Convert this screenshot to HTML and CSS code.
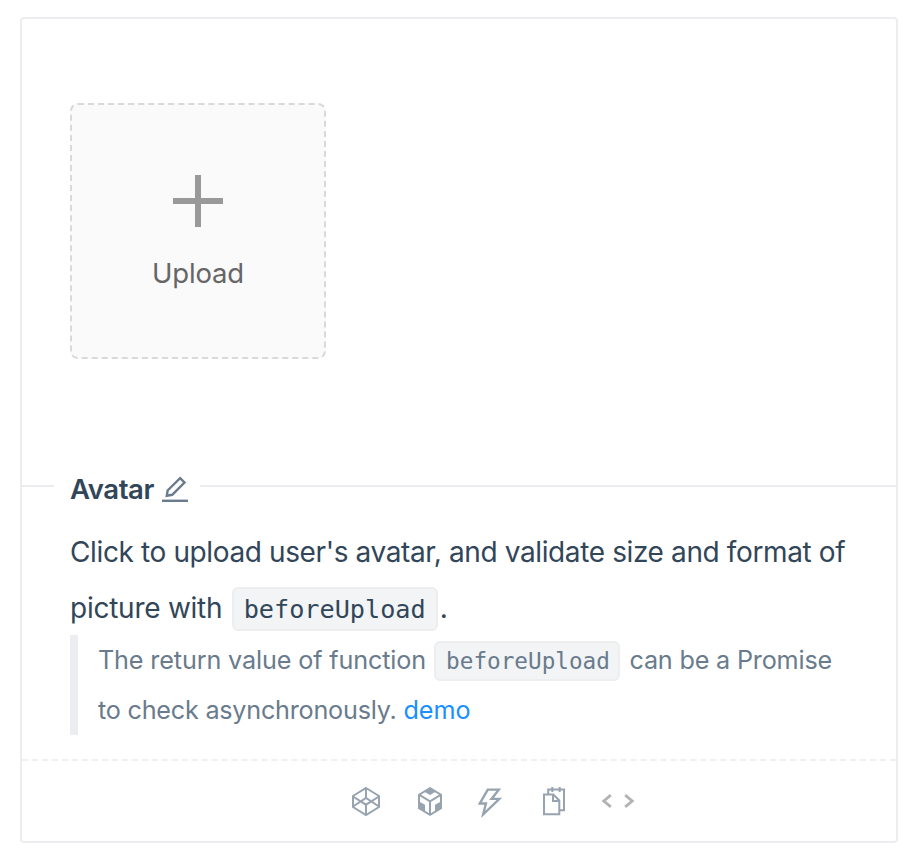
FILE: index.html
```
<!DOCTYPE html>
<html lang="en">
<head>
<meta charset="utf-8">
<title>Avatar upload</title>
<link rel="stylesheet" href="styles.css">
</head>
<body>
<section class="card">
  <div class="demo">
    <div class="upload" role="button">
      <svg class="plus" viewBox="0 0 50 52"><path d="M22 0h6v23h22v6H28v23h-6V29H0v-6h22z"/></svg>
      <div class="upload-text">Upload</div>
    </div>
  </div>
  <div class="title-row">
    <div class="title"><span class="title-text">Avatar</span>
      <svg class="edit" viewBox="0 0 26 26"><path d="M18.1 2.1 22.5 6.5 10.2 18.8 4.8 19.7 5.6 14.5Z"/><path d="M0 24.8h26"/></svg>
    </div>
  </div>
  <div class="description">
    <p><span class="line-one">Click to upload user's avatar, and validate size and format of</span><br><span class="line-two">picture with</span> <code>beforeUpload</code>.</p>
    <blockquote><span class="quote-one">The return value of function</span> <code>beforeUpload</code> <span class="quote-end">can be a Promise</span><br><span class="quote-two">to check asynchronously. <a>demo</a></span></blockquote>
  </div>
  <div class="actions">
    <svg viewBox="0 0 64 40"><path class="line" d="M32 7 45 15V26L32 34 19 26V15ZM19 15.5 32 23.7 45 15.5M19 25.5 32 17 45 25.5M32 7V17M32 23.7V34"/></svg>
    <svg viewBox="0 0 64 40"><path class="line" d="M32 7.2 43 13.7V27.3L32 33.8 21 27.3V13.7ZM21 13.7 32 20.3 43 13.7M32 20.3V33.8"/><path d="M32 7 38 10.5 32 14 26 10.5ZM21 20.5 27 23.8V30.8L21 27ZM43 20.5 37 23.8V30.8L43 27Z"/></svg>
    <svg class="bolt" viewBox="0 0 60 40"><path transform="translate(10 4) scale(.03516)" d="M848 359.3H627.7L825.8 109c4.1-5.3.4-13-6.3-13H436c-2.8 0-5.5 1.5-6.9 4L170 547.5c-3.1 5.3.7 12 6.9 12h174.4l-89.4 357.6c-1.9 7.8 7.5 13.3 13.3 7.7L853.5 373c5.2-4.9 1.7-13.7-5.5-13.7zM378.2 732.5l60.3-241H281.1l189.6-327.4h224.6L487 427.4h211L378.2 732.5z"/></svg>
    <svg viewBox="0 0 64 40"><path class="line" d="M22 13.5H31.3L37.3 19.5V33.2H22ZM31 13.5V20H37.3M26.2 13.5V8.5H42V29.2H37.3M30.3 6V11M37.7 6V11"/></svg>
    <svg class="code-icon" viewBox="0 0 64 40"><path d="M24.8 14.2 17.8 20 24.8 25.8M39.2 14.2 46.2 20 39.2 25.8"/></svg>
  </div>
</section>
</body>
</html>
```

FILE: styles.css
```
* { box-sizing: border-box; }
body {
  margin: 0;
  padding: 17px 26px 17px 20px;
  background: #fff;
  color: #314659;
  font: 28px/56px Inter, "Liberation Sans", sans-serif;
}
.card {
  height: 826px;
  border: 2px solid #ebedf0;
  border-radius: 4px;
  display: flex;
  flex-direction: column;
}
.demo { height: 466px; padding: 84px 48px; }
.upload {
  width: 256px;
  height: 256px;
  border: 2px dashed #d9d9d9;
  border-radius: 8px;
  background: #fafafa;
  display: flex;
  flex-direction: column;
  align-items: center;
  padding-top: 70px;
}
.plus { width: 50px; height: 52px; fill: #999; }
.upload-text { margin-top: 24px; line-height: 44px; color: #666; font-size: 27.5px; letter-spacing: -0.2px; }
.title-row { display: flex; height: 39px; }
.title-row::before { content: ""; width: 32px; height: 2px; background: #ebedf0; }
.title-row::after { content: ""; flex: 1; height: 2px; background: #ebedf0; }
.title {
  width: 146px;
  padding-left: 16px;
  display: flex;
  height: 8px;
  align-items: center;
  font-weight: 600;
}
.title-text { width: 92px; font-size: 27.5px; white-space: nowrap; letter-spacing: -0.4px; }
.edit {
  width: 26px;
  height: 26px;
  flex: none;
  fill: none;
  stroke: #697b8c;
  stroke-width: 2.4;
}
.description { height: 235px; padding: 0 48px; white-space: nowrap; }
p { margin: 0; height: 111px; }
.line-one { letter-spacing: -0.38px; }
.line-two { letter-spacing: -0.25px; }
code {
  display: inline-block;
  font: 25.2px/34px "DejaVu Sans Mono", monospace;
  background: #f2f4f5;
  border: 2px solid #eee;
  border-radius: 6px;
  padding: 4px 10px 2px;
  margin: 0 2px 0 1.5px;
}
blockquote {
  margin: 0;
  height: 100px;
  border-left: 8px solid #ebedf0;
  padding-left: 20px;
  color: #697b8c;
  font-size: 25.2px;
  line-height: 50px;
}
blockquote code {
  font-size: 22.68px;
  line-height: 32px;
  padding: 2px 8.5px 2px 10px;
  margin-left: 1px;
}
.quote-one { letter-spacing: -0.14px; }
.quote-end { letter-spacing: -0.19px; }
.quote-two { letter-spacing: -0.23px; }
a { color: #1890ff; letter-spacing: 0; }
.actions {
  height: 82px;
  border-top: 2px dashed #f0f0f0;
  padding: 20px 0 0 312px;
  display: flex;
}
.actions svg { width: 64px; height: 40px; fill: #97a3af; }
.actions .bolt { width: 60px; }
.actions .line { fill: none; stroke: #97a3af; stroke-width: 2; }
.actions .code-icon { fill: none; stroke: #b2b2b2; stroke-width: 2.8; }
```
